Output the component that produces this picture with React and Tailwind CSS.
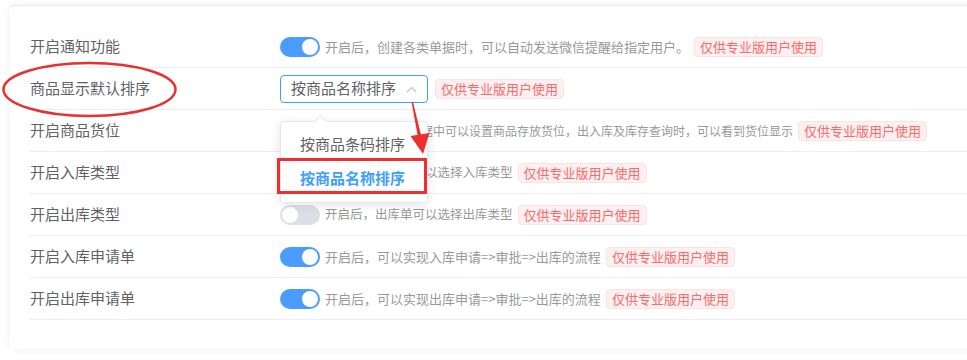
import React from "react";

const FONT = "font-['Noto_Sans_CJK_SC','Noto_Sans',sans-serif]";

const Toggle = ({ on }) => (
  <span
    className={`relative inline-block w-[40px] h-[20px] shrink-0 rounded-full ${
      on ? "bg-[#4a9dff]" : "bg-[#dcdfe6]"
    }`}
  >
    <span
      className={`absolute top-[2px] w-[16px] h-[16px] rounded-full bg-white ${
        on ? "left-[22px]" : "left-[2px]"
      }`}
    ></span>
  </span>
);

const ProTag = ({ className = "" }) => (
  <span
    className={`inline-flex items-center h-[20px] px-[5px] rounded-[4px] border border-[#fde2e2] bg-[#fef0f0] text-[13px] text-[#f56c6c] whitespace-nowrap ${className}`}
  >
    仅供专业版用户使用
  </span>
);

const Row = ({ label, children }) => (
  <div className="flex items-center h-[42px] border-b border-[#ebeef5]">
    <div className="w-[250px] shrink-0 text-[15px] text-[#606266]">{label}</div>
    <div className="flex items-center">{children}</div>
  </div>
);

const ToggleRow = ({ label, on, desc, size = "text-[13px]" }) => (
  <Row label={label}>
    <Toggle on={on} />
    <span className={`ml-[5px] ${size} text-[#999] whitespace-nowrap`}>{desc}</span>
    <ProTag className="ml-[5px]" />
  </Row>
);

const SortSelect = () => (
  <div className="relative">
    <div className="flex items-center w-[148px] h-[28px] pl-[10px] rounded-[4px] border border-[#409eff] bg-white text-[15px] text-[#606266]">
      按商品名称排序
      <svg className="absolute left-[126px] top-[11px]" width="11" height="7" viewBox="0 0 11 7">
        <path d="M1 6 L5.5 1.5 L10 6" fill="none" stroke="#c0c4cc" strokeWidth="1.2" />
      </svg>
    </div>

    {/* dropdown */}
    <div className="absolute z-20 left-0 top-[46px] w-[148px] py-[6px] rounded-[4px] border border-[#e4e7ed] bg-white shadow-[0_2px_12px_rgba(0,0,0,0.1)]">
      <span className="absolute -top-[5px] left-[35px] w-[9px] h-[9px] rotate-45 bg-white border-t border-l border-[#e4e7ed]"></span>
      <div className="flex items-center h-[34px] pl-[19px] text-[15px] text-[#606266] whitespace-nowrap">
        按商品条码排序
      </div>
      <div className="flex items-center h-[34px] pl-[19px] text-[15px] font-bold text-[#409eff] whitespace-nowrap">
        按商品名称排序
      </div>
      {/* annotation box */}
      <div className="absolute left-[-4px] top-[36px] w-[150px] h-[36px] border-[3px] border-[#ee2f2f]"></div>
    </div>
  </div>
);

export default function App() {
  return (
    <div className={`relative w-full h-[360px] overflow-hidden bg-white ${FONT}`}>
      <div className="ml-[10px] mt-[5px] w-[1000px] h-[344px] pt-[20px] pl-[20px] rounded-[4px] border-t border-[#e6e9ee] bg-white shadow-[0_0_8px_rgba(0,0,0,0.07)]">
        <ToggleRow
          label="开启通知功能"
          on
          desc="开启后，创建各类单据时，可以自动发送微信提醒给指定用户。"
        />
        <Row label="商品显示默认排序">
          <SortSelect />
          <ProTag className="ml-[7px]" />
        </Row>
        <ToggleRow
          label="开启商品货位"
          on
          size="text-[12px]"
          desc="开启后，出入库单据中可以设置商品存放货位，出入库及库存查询时，可以看到货位显示"
        />
        <ToggleRow
          label="开启入库类型"
          on
          size="text-[12.5px]"
          desc="开启后，入库单可以选择入库类型"
        />
        <ToggleRow
          label="开启出库类型"
          size="text-[12.5px]"
          desc="开启后，出库单可以选择出库类型"
        />
        <ToggleRow
          label="开启入库申请单"
          on
          desc="开启后，可以实现入库申请=>审批=>出库的流程"
        />
        <ToggleRow
          label="开启出库申请单"
          on
          desc="开启后，可以实现出库申请=>审批=>出库的流程"
        />
      </div>

      {/* red annotations */}
      <svg className="absolute inset-0 z-30 pointer-events-none" width="967" height="360">
        <ellipse cx="89.5" cy="89.5" rx="86" ry="26.5" fill="none" stroke="#e8302f" strokeWidth="2.5" />
        <polygon points="411.5,102 413,102 422,139 418.5,140" fill="#ee2f2f" />
        <polygon points="410.5,136 429.5,133 423,154" fill="#ee2f2f" />
      </svg>
    </div>
  );
}
